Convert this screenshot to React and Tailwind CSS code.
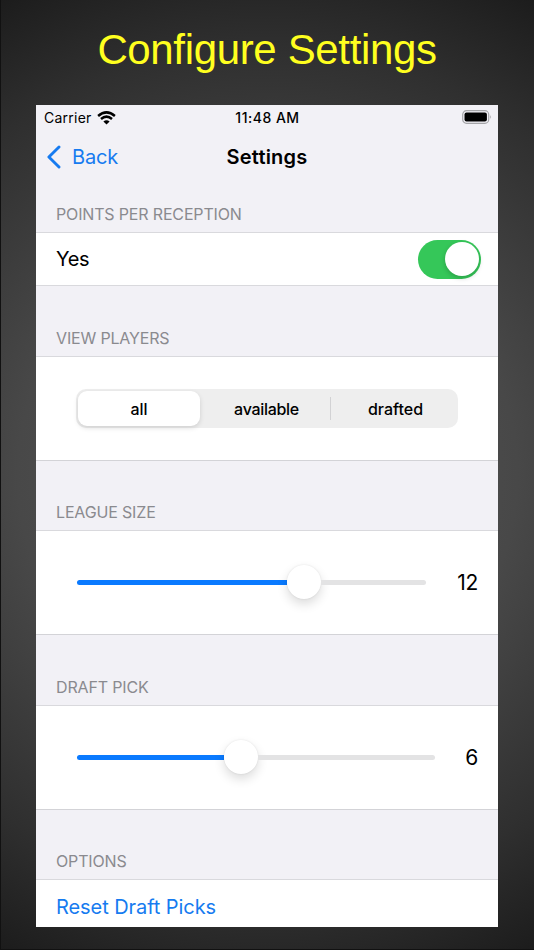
function SectionHeader({ children, className }) {
  return (
    <div className={`flex items-end border-b border-[#d9d9dd] pl-5 ${className}`}>
      <h2 className="mb-2 text-[16px] leading-5 tracking-[-0.16px] text-[#8a8a8f]">{children}</h2>
    </div>
  );
}

function SliderRow({ filled, rest, value }) {
  return (
    <div className="flex h-[104px] items-center justify-between border-b border-[#d3d3d7] bg-white pr-5 pl-[41px]">
      <div className="flex items-center">
        <div className={`h-[5px] rounded-l-full bg-[#0a7aff] ${filled}`} />
        <div className="-mt-[18px] -mb-4 h-[34px] w-[34px] rounded-full bg-white shadow-[0_5px_11px_rgba(0,0,0,0.14),0_0_2px_rgba(0,0,0,0.1)]" />
        <div className={`h-[5px] rounded-r-full bg-[#e3e3e4] ${rest}`} />
      </div>
      <span className="text-[21px] leading-6 tracking-[-0.3px] text-black">{value}</span>
    </div>
  );
}

export default function App() {
  return (
    <main className="flex h-[950px] w-[534px] flex-col items-center border-b border-l border-[#111] bg-[radial-gradient(circle_at_50%_50%,#585858_0px,#484848_250px,#2f2f2f_430px,#1c1c1c_545px)] pr-px font-['Inter','Liberation_Sans',sans-serif]">
      <h1 className="flex h-[105px] shrink-0 items-start pt-[26px] font-['Liberation_Sans',sans-serif] text-[42px] leading-[48px] tracking-[-0.35px] whitespace-nowrap text-[#ffff1f]">
        Configure Settings
      </h1>
      <section className="h-[822px] w-[462px] shrink-0 overflow-hidden bg-[#f2f1f6] text-black">
        <div className="grid h-[26px] grid-cols-3 items-center pr-[6px] pl-2 text-[14px] leading-5">
          <div className="flex items-center gap-[5px]">
            <span className="tracking-[0.25px]">Carrier</span>
            <svg className="-mt-px" width="19" height="14" viewBox="0 0 19 14" fill="none" stroke="black" strokeWidth="2.5">
              <path d="M1.1 5Q9.5-2.2 17.9 5" />
              <path d="M4 8Q9.5 3.3 15 8" />
              <path d="M6.4 10.5Q9.5 7.8 12.6 10.5L9.5 13.5Z" fill="black" stroke="none" />
            </svg>
          </div>
          <span className="-ml-px text-center font-medium tracking-[0.5px] whitespace-nowrap">11:48 AM</span>
          <svg className="-mt-[2px] justify-self-end" width="30" height="14" viewBox="0 0 30 14">
            <rect x="0.7" y="0.7" width="26" height="12.6" rx="3.8" fill="none" stroke="#a5a5a8" strokeWidth="1.2" />
            <rect x="2.5" y="2.5" width="22.4" height="9" rx="2" fill="black" />
            <path d="M28.2 5Q30 7 28.2 9Z" fill="#a5a5a8" />
          </svg>
        </div>
        <div className="grid h-[51px] grid-cols-3 items-center pr-3 pl-[11px] text-[20px] leading-6">
          <div className="flex items-center gap-[11px] text-[#167bf0]">
            <svg width="14" height="24" viewBox="0 0 14 24" fill="none" stroke="currentColor" strokeWidth="2.9" strokeLinecap="round" strokeLinejoin="round">
              <path d="M12 2L1.9 12L12 22" />
            </svg>
            <span className="tracking-[-0.2px]">Back</span>
          </div>
          <span className="pl-px text-center font-semibold tracking-[0.2px]">Settings</span>
        </div>

        <SectionHeader className="h-[51px]">POINTS PER RECEPTION</SectionHeader>
        <div className="flex h-[53px] items-center justify-between border-b border-[#d9d9dd] bg-white pr-[17px] pl-5">
          <span className="text-[20px] leading-6 tracking-[-0.3px]">Yes</span>
          <div className="flex h-[39px] w-[63px] items-center justify-end rounded-full bg-[#35c759] pr-[2px]">
            <div className="h-[34px] w-[34px] rounded-full bg-white shadow-[0_2px_5px_rgba(0,0,0,0.2)]" />
          </div>
        </div>

        <SectionHeader className="h-[71px]">VIEW PLAYERS</SectionHeader>
        <div className="flex h-[104px] items-center border-b border-[#d3d3d7] bg-white pl-10">
          <div className="flex h-[39px] w-[382px] items-center rounded-[10px] bg-[#eeeeee] p-[2px] text-[16px] leading-5 font-medium">
            <div className="flex h-[35px] w-[122px] items-center justify-center rounded-[9px] bg-white shadow-[0_2px_5px_rgba(0,0,0,0.13)]">all</div>
            <div className="flex-1 pl-[3px] text-center tracking-[-0.3px]">available</div>
            <div className="h-[23px] w-px bg-[#d2d2d4]" />
            <div className="w-[125px] pl-[4px] text-center">drafted</div>
          </div>
        </div>

        <SectionHeader className="h-[70px]">LEAGUE SIZE</SectionHeader>
        <SliderRow filled="w-[210px]" rest="w-[105px]" value="12" />
        <SectionHeader className="h-[71px]">DRAFT PICK</SectionHeader>
        <SliderRow filled="w-[147px]" rest="w-[177px]" value="6" />
        <SectionHeader className="h-[70px]">OPTIONS</SectionHeader>
        <div className="flex h-[53px] items-center bg-white pl-5">
          <span className="text-[20px] leading-6 tracking-[-0.07px] text-[#167bf0]">Reset Draft Picks</span>
        </div>
      </section>
    </main>
  );
}
